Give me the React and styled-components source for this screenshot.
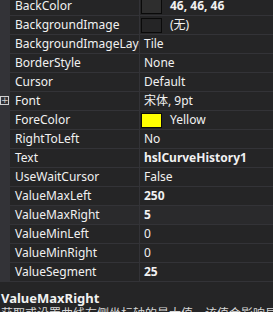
import React from 'react';
import styled, { createGlobalStyle } from 'styled-components';

const GlobalStyle = createGlobalStyle`
  html, body {
    margin: 0;
    padding: 0;
    background: #252526;
    overflow: hidden;
  }
  body {
    font-family: "Noto Sans", "Noto Sans CJK SC", sans-serif;
  }
`;

const Panel = styled.div`
  width: 273px;
  height: 312px;
  overflow: hidden;
  background: #252526;
  display: flex;
  flex-direction: column;
`;

const Grid = styled.div`
  margin-top: -3px;
  display: flex;
  flex-direction: column;
`;

const Row = styled.div`
  display: flex;
  height: 19px;
  box-sizing: border-box;
  border-bottom: 1px solid #333337;
  background: ${p => (p.$selected ? '#2a2a2c' : '#252526')};
`;

const Gutter = styled.div`
  width: 10px;
  flex: none;
  background: #333337;
  position: relative;
`;

const Expander = styled.div`
  position: absolute;
  left: 0;
  top: 4px;
  width: 7px;
  height: 7px;
  border: 1px solid #d0d0d0;
  color: #d0d0d0;
  font: 9px/7px "DejaVu Sans", sans-serif;
  text-align: center;
`;

const NameCell = styled.div`
  width: 130px;
  flex: none;
  box-sizing: border-box;
  padding-left: 5px;
  border-right: 1px solid #333337;
  color: #f1f1f1;
  font-size: 12px;
  line-height: 18px;
  white-space: nowrap;
  overflow: hidden;
`;

const ValueCell = styled.div`
  flex: 1;
  display: flex;
  align-items: center;
  gap: 8px;
  padding-left: 4px;
  color: #f1f1f1;
  font-size: 12px;
  font-weight: ${p => (p.$bold ? 700 : 400)};
  line-height: 18px;
  white-space: nowrap;
`;

const Swatch = styled.span`
  width: 19px;
  height: 13px;
  flex: none;
  margin-left: -3px;
  border: 1px solid #0a0a0a;
  background: ${p => p.$color};
`;

const Desc = styled.div`
  padding: 8px 0 0 1px;
  color: #f1f1f1;
`;

const DescTitle = styled.div`
  font-size: 13px;
  font-weight: 700;
  line-height: 16px;
`;

const DescText = styled.div`
  font-size: 12px;
  line-height: 16px;
  color: #d8d8d8;
  white-space: nowrap;
`;

const props = [
  { name: 'BackColor', value: '46, 46, 46', bold: true, swatch: '#2e2e2e' },
  { name: 'BackgroundImage', value: '(无)', swatch: '#252526' },
  { name: 'BackgroundImageLayout', value: 'Tile' },
  { name: 'BorderStyle', value: 'None' },
  { name: 'Cursor', value: 'Default' },
  { name: 'Font', value: '宋体, 9pt', expand: true },
  { name: 'ForeColor', value: 'Yellow', swatch: '#ffff00' },
  { name: 'RightToLeft', value: 'No' },
  { name: 'Text', value: 'hslCurveHistory1', bold: true },
  { name: 'UseWaitCursor', value: 'False' },
  { name: 'ValueMaxLeft', value: '250', bold: true },
  { name: 'ValueMaxRight', value: '5', bold: true, selected: true },
  { name: 'ValueMinLeft', value: '0' },
  { name: 'ValueMinRight', value: '0' },
  { name: 'ValueSegment', value: '25', bold: true },
];

export default function App() {
  return (
    <Panel>
      <GlobalStyle />
      <Grid>
        {props.map(p => (
          <Row key={p.name} $selected={p.selected}>
            <Gutter>{p.expand && <Expander>+</Expander>}</Gutter>
            <NameCell>{p.name}</NameCell>
            <ValueCell $bold={p.bold}>
              {p.swatch && <Swatch $color={p.swatch} />}
              {p.value}
            </ValueCell>
          </Row>
        ))}
      </Grid>
      <Desc>
        <DescTitle>ValueMaxRight</DescTitle>
        <DescText>获取或设置曲线右侧坐标轴的最大值，该值会影响显示的范围</DescText>
      </Desc>
    </Panel>
  );
}
